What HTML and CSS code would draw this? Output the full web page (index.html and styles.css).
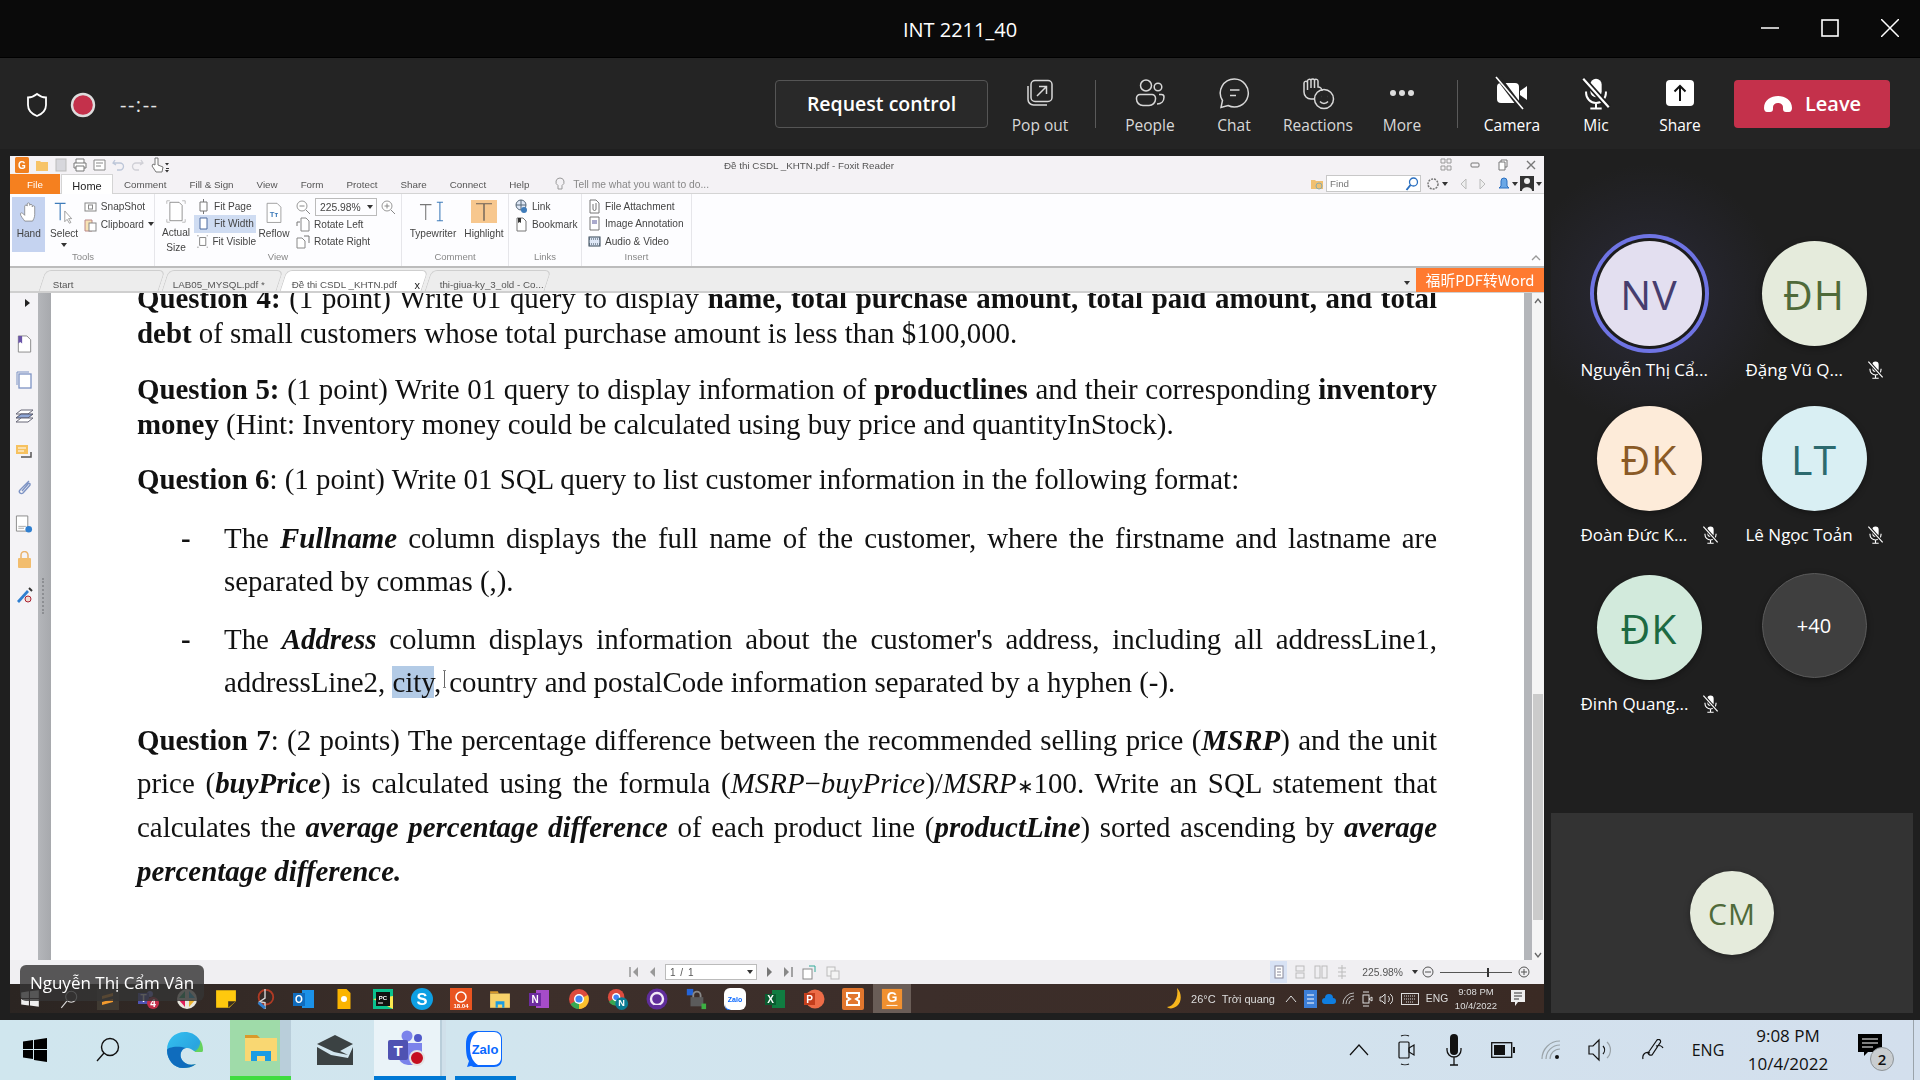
FILE: index.html
```html
<!DOCTYPE html>
<html lang="en">
<head>
<meta charset="utf-8">
<title>INT 2211_40</title>
<link rel="stylesheet" href="styles.css">
</head>
<body>
<svg class="sprite" width="0" height="0">
  <symbol id="micoff" viewBox="0 0 24 24"><rect x="8" y="2" width="8" height="13" rx="4" fill="currentColor"/><path d="M5 11v1a7 7 0 0 0 14 0v-1M12 19v4M8 23h8" fill="none" stroke="currentColor" stroke-width="1.4"/><path d="M3 2l18 20" stroke="#1f1f1f" stroke-width="4"/><path d="M3 2l18 20" stroke="currentColor" stroke-width="1.5"/></symbol>
</svg>

<header class="titlebar">
  <h1 class="title">INT 2211_40</h1>
  <div class="winctl">
    <svg width="18" height="18" viewBox="0 0 18 18"><path d="M0 9h18" stroke="#fff" stroke-width="1.500"/></svg>
    <svg width="18" height="18" viewBox="0 0 18 18"><rect x="1" y="1" width="16" height="16" fill="none" stroke="#fff" stroke-width="1.600"/></svg>
    <svg width="18" height="18" viewBox="0 0 18 18"><path d="M0 0l18 18M18 0L0 18" stroke="#fff" stroke-width="1.500"/></svg>
  </div>
</header>

<section class="toolbar">
  <div class="status">
    <svg width="24" height="26" viewBox="0 0 24 26"><path d="M12 2c3 2.500 6 3.500 9 3.500V13c0 5.500-4 9-9 11-5-2-9-5.500-9-11V5.500c3 0 6-1 9-3.500z" fill="none" stroke="#fff" stroke-width="1.800"/></svg>
    <svg width="26" height="26" viewBox="0 0 26 26"><circle cx="13" cy="13" r="11" fill="#c4314b" stroke="#ddd" stroke-width="2.400"/></svg>
    <span class="timer">--:--</span>
  </div>
  <button class="request">Request control</button>
  <div class="tool">
    <svg width="30" height="30" viewBox="0 0 30 30" class="ico"><rect x="6" y="2.500" width="21" height="21" rx="4"/><path d="M3 8v13.500a5.500 5.500 0 0 0 5.500 5.500H22M12 18l9-9M14 8.500h7.500V16"/></svg>
    <span>Pop out</span>
  </div>
  <i class="vr"></i>
  <div class="tool">
    <svg width="32" height="32" viewBox="0 0 32 32" class="ico"><circle cx="12" cy="8.500" r="5.500"/><circle cx="24" cy="10" r="3.800"/><path d="M2.500 21a3.500 3.500 0 0 1 3.500-3.500h12a3.500 3.500 0 0 1 3.500 3.500v1a6.500 6.500 0 0 1-6.500 6.500H9A6.500 6.500 0 0 1 2.500 22zM25 17.500h2.500A2.500 2.500 0 0 1 30 20c0 4-2.500 7-7 7"/></svg>
    <span>People</span>
  </div>
  <div class="tool">
    <svg width="32" height="32" viewBox="0 0 32 32" class="ico"><path d="M16.500 2A14 14 0 1 1 10 28.500L3 30.500l1.500-7A14 14 0 0 1 16.500 2zM12 13h9.500M12 18.500h6"/></svg>
    <span>Chat</span>
  </div>
  <div class="tool">
    <svg width="34" height="34" viewBox="0 0 34 34" class="ico"><path d="M14 23H10c-4 0-7-3-7-7V7a2 2 0 0 1 3.500-1V5a2 2 0 0 1 3.500-1 2 2 0 0 1 3.500 0 2 2 0 0 1 3.500 1v6c2.500 0 4 2 4 4M6.500 6v8M10 4v8M13.500 4v8"/><circle cx="23" cy="23" r="9.500"/><path d="M19 25.500c2 2.500 6 2.500 8 0M20 20.500h.1M26 20.500h.1"/></svg>
    <span>Reactions</span>
  </div>
  <div class="tool">
    <svg width="30" height="30" viewBox="0 0 30 30"><circle cx="6" cy="15" r="3" fill="#ddd"/><circle cx="15" cy="15" r="3" fill="#ddd"/><circle cx="24" cy="15" r="3" fill="#ddd"/></svg>
    <span>More</span>
  </div>
  <i class="vr"></i>
  <div class="tool on">
    <svg width="34" height="34" viewBox="0 0 34 34"><rect x="2" y="7" width="22" height="20" rx="4" fill="#fff"/><path d="M25 15l7-5v14l-7-5z" fill="#fff"/><path d="M3 1l24 32" stroke="#242424" stroke-width="5"/><path d="M1 1l27 32" stroke="#fff" stroke-width="1.600"/></svg>
    <span>Camera</span>
  </div>
  <div class="tool on">
    <svg width="34" height="34" viewBox="0 0 24 24" class="tool-mic"><use href="#micoff"/></svg>
    <span>Mic</span>
  </div>
  <div class="tool on">
    <svg width="32" height="32" viewBox="0 0 32 32"><rect x="2" y="3" width="28" height="26" rx="4" fill="#fff"/><path d="M16 24V9M10.500 14.500L16 9l5.500 5.500" fill="none" stroke="#111" stroke-width="2"/></svg>
    <span>Share</span>
  </div>
  <button class="leave">
    <svg width="30" height="18" viewBox="0 0 30 18"><path d="M1 13C1 5 8 1 15 1s14 4 14 12c0 2-1 4-3 4h-3c-2 0-3-1-3-3v-2c0-2-2-4-5-4s-5 2-5 4v2c0 2-1 3-3 3H4c-2 0-3-2-3-4z" fill="#fff"/></svg>
    Leave
  </button>
</section>

<main class="main">
  <div class="stage">
    <div class="share">
      <div class="foxit">
        <div class="qa">
          <div class="qa-icons">
            <svg width="14" height="16" viewBox="0 0 14 16"><rect width="14" height="16" rx="1.500" fill="#f08020"/><text x="7" y="12" class="glyph-w">G</text></svg>
            <svg width="14" height="14" viewBox="0 0 14 14"><path d="M1 3h4l1 1h7v9H1z" fill="#f7c468"/></svg>
            <svg width="12" height="14" viewBox="0 0 12 14"><rect x="1" y="1" width="10" height="12" fill="#d7d7dc" stroke="#bbb"/></svg>
            <svg width="14" height="14" viewBox="0 0 14 14"><path d="M3 5V1h8v4M3 10H1V5h12v5h-2M3 8h8v5H3z" fill="#fff" stroke="#777"/></svg>
            <svg width="13" height="14" viewBox="0 0 13 14"><path d="M1 2h11v10H1zM3 5h7M3 8h5" fill="#fff" stroke="#888"/></svg>
            <svg width="13" height="14" viewBox="0 0 13 14"><path d="M3 2L1 5l3 2M1.500 5H8a3.500 3.500 0 0 1 0 7H5" fill="none" stroke="#bcc6d8" stroke-width="1.300"/></svg>
            <svg width="13" height="14" viewBox="0 0 13 14"><path d="M10 2l2 3-3 2M11.500 5H5a3.500 3.500 0 0 0 0 7h3" fill="none" stroke="#d0d0d6" stroke-width="1.300"/></svg>
            <svg width="20" height="16" viewBox="0 0 20 16"><path d="M5 1v7L3 7 2 9l4 6h6l1-5-5-2V1z" fill="#fff" stroke="#777"/><path d="M15 6h4l-2 2.500zM16 11h3v1h-3zM15 13h4l-2 2.500z" fill="#333"/></svg>
          </div>
          <span class="doc-title">Đề thi CSDL _KHTN.pdf - Foxit Reader</span>
          <div class="qa-win">
            <svg width="12" height="14" viewBox="0 0 12 14"><path d="M1 1h4v4H1zM7 1h4v4H7zM1 8h4v4H1zM7 8h4v4H7z" fill="none" stroke="#999"/></svg>
            <svg width="10" height="10" viewBox="0 0 10 10"><rect x="1" y="3" width="8" height="4" rx="1" fill="none" stroke="#777"/></svg>
            <svg width="10" height="12" viewBox="0 0 10 12"><path d="M3 3V1h6v7H7M1 3h6v8H1z" fill="#fff" stroke="#777"/></svg>
            <svg width="10" height="10" viewBox="0 0 10 10"><path d="M1 1l8 8M9 1L1 9" stroke="#777" stroke-width="1.400"/></svg>
          </div>
        </div>
        <div class="tabs">
          <span class="t-file">File</span>
          <span class="t-home">Home</span>
          <span>Comment</span><span>Fill &amp; Sign</span><span>View</span><span>Form</span><span>Protect</span><span>Share</span><span>Connect</span><span>Help</span>
          <svg class="bulb" width="10" height="14" viewBox="0 0 10 14"><path d="M5 1a4 4 0 0 1 2 7.500V12H3V8.500A4 4 0 0 1 5 1z" fill="none" stroke="#999"/></svg>
          <span class="tell">Tell me what you want to do...</span>
          <div class="find-wrap">
            <svg width="14" height="14" viewBox="0 0 14 14"><path d="M1 3h4l1 1h7v8H1z" fill="#f0c070"/><circle cx="9" cy="9" r="3" fill="none" stroke="#8aa"/></svg>
            <div class="find">Find
              <svg width="14" height="14" viewBox="0 0 14 14"><circle cx="8.500" cy="5" r="4" fill="none" stroke="#2a6fc0" stroke-width="1.300"/><path d="M5.500 8L1.500 13" stroke="#2a6fc0" stroke-width="2"/></svg>
            </div>
            <svg width="14" height="14" viewBox="0 0 14 14"><circle cx="7" cy="7" r="5" fill="none" stroke="#777" stroke-dasharray="2 1" stroke-width="1.500"/></svg>
            <b class="tri"></b>
            <svg class="gap8" width="7" height="14" viewBox="0 0 7 14"><path d="M6 2L1 7l5 5z" fill="#eee" stroke="#bbb"/></svg>
            <svg class="gap8" width="7" height="14" viewBox="0 0 7 14"><path d="M1 2l5 5-5 5z" fill="#eee" stroke="#bbb"/></svg>
            <svg class="gap8" width="12" height="14" viewBox="0 0 12 14"><path d="M6 1a3 3 0 0 1 3 3v5l2 2H1l2-2V4a3 3 0 0 1 3-3z" fill="#6aa7e6" stroke="#2a6fc0"/></svg>
            <b class="tri"></b>
            <svg width="14" height="15" viewBox="0 0 14 15"><rect width="14" height="15" fill="#333"/><circle cx="7" cy="5" r="3" fill="#eee"/><path d="M2 15c0-5 10-5 10 0z" fill="#eee"/></svg>
            <b class="tri"></b>
          </div>
        </div>
        <div class="ribbon">
          <div class="group g-tools">
            <div class="gbody">
              <div class="big hand">
                <svg viewBox="0 0 28 30"><path d="M8 27c-2-3-6-7-6-10 0-2 3-2 4 0l2 2V6a1.800 1.800 0 0 1 3.500 0V3a1.800 1.800 0 0 1 3.500 0v2a1.800 1.800 0 0 1 3.500 0v2a1.800 1.800 0 0 1 3.500 0v11c0 4-2 7-3 9z" fill="#fff" stroke="#777"/></svg>
                <span>Hand</span>
              </div>
              <div class="big select">
                <svg viewBox="0 0 28 30"><path d="M2 3h14M9 3v22" stroke="#3f7cba" stroke-width="1.500" fill="none"/><path d="M15 13v14l3-3 3 5 2-1-3-5h4z" fill="#fff" stroke="#888"/></svg>
                <span>Select</span><b class="tri small"></b>
              </div>
              <div class="col c-tools">
                <div class="sm"><svg width="13" height="13" viewBox="0 0 13 13"><rect x="1" y="3" width="11" height="8" fill="#fff" stroke="#888"/><rect x="4.500" y="5" width="4" height="4" fill="none" stroke="#888"/></svg>SnapShot</div>
                <div class="sm"><svg width="13" height="15" viewBox="0 0 13 15"><path d="M1 3h7v11H1z" fill="#f8e3b5" stroke="#b88"/><rect x="5" y="6" width="7" height="8" fill="#fff" stroke="#888"/></svg>Clipboard <b class="tri"></b></div>
              </div>
            </div>
            <div class="glabel">Tools</div>
          </div>
          <div class="group g-view">
            <div class="gbody">
              <div class="big actual">
                <svg viewBox="0 0 26 30"><path d="M5 3h12l4 4v20H5z" fill="#fff" stroke="#777"/><path d="M1 5V1h4M25 5V1h-4M1 25v4h4M25 25v4h-4" fill="none" stroke="#aaa"/></svg>
                <span>Actual<br>Size</span>
              </div>
              <div class="col c-fit">
                <div class="sm"><svg width="13" height="15" viewBox="0 0 13 15"><path d="M3 3h7v9H3zM6.500 0v3M6.500 12v3" fill="#fff" stroke="#777"/></svg>Fit Page</div>
                <div class="sm hl"><svg width="13" height="15" viewBox="0 0 13 15"><path d="M3 2h7v11H3z" fill="#fff" stroke="#4d6a9e"/></svg>Fit Width</div>
                <div class="sm"><svg width="13" height="15" viewBox="0 0 13 15"><path d="M3 3h7v9H3z" fill="#fff" stroke="#777"/><path d="M0 1h2M11 1h2M0 14h2M11 14h2" stroke="#999"/></svg>Fit Visible</div>
              </div>
              <div class="big reflow">
                <svg viewBox="0 0 24 30"><path d="M3 3h13l5 5v20H3z" fill="#fff" stroke="#888"/><text x="12" y="21" class="glyph-b">Tт</text></svg>
                <span>Reflow</span>
              </div>
              <div class="col c-zoom">
                <div class="sm zoomrow">
                  <svg width="15" height="15" viewBox="0 0 15 15"><circle cx="6" cy="6" r="5" fill="#fff" stroke="#999"/><path d="M3.500 6h5M10 10l4 4" stroke="#888"/></svg>
                  <div class="zoombox">225.98%<b class="tri"></b></div>
                  <svg width="15" height="15" viewBox="0 0 15 15"><circle cx="6" cy="6" r="5" fill="#fff" stroke="#999"/><path d="M3.500 6h5M6 3.500v5M10 10l4 4" stroke="#888"/></svg>
                </div>
                <div class="sm"><svg width="14" height="15" viewBox="0 0 14 15"><path d="M5 1h5l3 3v10H5z" fill="#fff" stroke="#888"/><path d="M1 9V5h3" fill="none" stroke="#777"/></svg>Rotate Left</div>
                <div class="sm"><svg width="14" height="15" viewBox="0 0 14 15"><path d="M1 4h5l3 3v7H1z" fill="#fff" stroke="#888"/><path d="M13 9V2h-5" fill="none" stroke="#777"/></svg>Rotate Right</div>
              </div>
            </div>
            <div class="glabel">View</div>
          </div>
          <div class="group g-comment">
            <div class="gbody">
              <div class="big typew">
                <svg width="40" viewBox="0 0 40 30"><path d="M3 6h15M10.500 6v20" stroke="#777" stroke-width="1.400" fill="none"/><path d="M25 3h8M25 27h8M29 3v24" stroke="#3f7cba" stroke-width="1.400" fill="none"/></svg>
                <span>Typewriter</span>
              </div>
              <div class="big highl">
                <svg viewBox="0 0 26 30" preserveAspectRatio="none"><rect width="26" height="30" fill="#f7c78e"/><path d="M5 5h16M13 5v22" stroke="#6d6257" stroke-width="1.400"/></svg>
                <span>Highlight</span>
              </div>
            </div>
            <div class="glabel">Comment</div>
          </div>
          <div class="group g-links">
            <div class="gbody">
              <div class="col">
                <div class="sm"><svg width="13" height="15" viewBox="0 0 13 15"><circle cx="6" cy="6" r="5" fill="#dde6f5" stroke="#567"/><path d="M1 6h10M6 1v10" stroke="#567"/><circle cx="9" cy="11" r="3" fill="#3f7cba"/></svg>Link</div>
                <div class="sm"><svg width="13" height="15" viewBox="0 0 13 15"><path d="M2 1h6l3 3v10H2z" fill="#fff" stroke="#777"/><path d="M3 1h3v5L4.500 5 3 6z" fill="#333"/></svg>Bookmark</div>
              </div>
            </div>
            <div class="glabel">Links</div>
          </div>
          <div class="group g-insert">
            <div class="gbody">
              <div class="col">
                <div class="sm"><svg width="13" height="15" viewBox="0 0 13 15"><path d="M2 1h6l3 3v10H2z" fill="#fff" stroke="#777"/><path d="M5 5v5a1.500 1.500 0 0 0 3 0V4" fill="none" stroke="#777"/></svg>File Attachment</div>
                <div class="sm"><svg width="13" height="15" viewBox="0 0 13 15"><path d="M2 1h9v13H2z" fill="#fff" stroke="#777"/><path d="M4 4h5v4H4z" fill="#aac" /></svg>Image Annotation</div>
                <div class="sm"><svg width="13" height="15" viewBox="0 0 13 15"><rect x="1" y="3" width="11" height="9" fill="#dfe8f7" stroke="#345"/><path d="M1 5h11M1 10h11" stroke="#345" stroke-dasharray="1 1"/></svg>Audio &amp; Video</div>
              </div>
            </div>
            <div class="glabel">Insert</div>
          </div>
          <svg class="collapse" width="10" height="8" viewBox="0 0 10 8"><path d="M1 6l4-4 4 4" fill="none" stroke="#999" stroke-width="1.300"/></svg>
        </div>
        <div class="doctabs">
          <div class="dtab d0"><span>Start</span></div>
          <div class="dtab d1"><span>LAB05_MYSQL.pdf *</span></div>
          <div class="dtab d2"><span>Đề thi CSDL _KHTN.pdf</span><em>x</em></div>
          <div class="dtab d3"><span>thi-giua-ky_3_old - Co...</span></div>
          <b class="tri tabarrow"></b>
          <div class="convert">福昕PDF转Word</div>
        </div>
        <div class="docrow">
          <nav class="side">
            <b class="tri-right"></b>
            <svg width="15" height="19" viewBox="0 0 15 19"><path d="M1 1h9l4 4v13H1z" fill="#fff" stroke="#888"/><path d="M1 1h4v8L3 7.500 1 9z" fill="#6a54a8"/></svg>
            <svg width="16" height="18" viewBox="0 0 16 18"><path d="M1 1h12M1 1v13" stroke="#7d93c4" fill="none"/><rect x="3" y="3" width="12" height="14" fill="#fff" stroke="#7d93c4" stroke-width="1.300"/></svg>
            <svg width="19" height="16" viewBox="0 0 19 16"><path d="M1 6l5-4h12l-5 4z" fill="#fff" stroke="#667"/><path d="M1 10l5-4h12l-5 4z" fill="#8ea6d6" stroke="#556"/><path d="M1 14l5-4h12l-5 4z" fill="#fff" stroke="#667"/></svg>
            <svg width="18" height="16" viewBox="0 0 18 16"><rect x="1" y="1" width="12" height="9" fill="#f6c15f"/><path d="M3 4h8M3 7h6" stroke="#fff"/><path d="M6 13h10V8" fill="none" stroke="#555" stroke-width="1.500"/></svg>
            <svg width="17" height="18" viewBox="0 0 17 18"><path d="M13 2L4 11a2 2 0 0 0 3 3l7-8a1 1 0 0 0-2-1l-6 7" fill="none" stroke="#7d93c4" stroke-width="1.400"/></svg>
            <svg width="18" height="19" viewBox="0 0 18 19"><path d="M1 1h12v16H1z" fill="#fff" stroke="#888"/><path d="M3 12h8M3 14h6" stroke="#aaa"/><circle cx="14" cy="15" r="3.500" fill="#2f7fd0"/></svg>
            <svg width="15" height="18" viewBox="0 0 15 18"><rect x="1" y="7" width="13" height="10" rx="1" fill="#f2bd6e"/><path d="M4 7V4a3.500 3.500 0 0 1 7 0v3" fill="none" stroke="#eab26a" stroke-width="1.500"/></svg>
            <svg width="17" height="18" viewBox="0 0 17 18"><path d="M1 14L11 3l2 2L3 16z" fill="#2f7fd0"/><path d="M13 1l3 3" stroke="#333" stroke-width="2"/><circle cx="12" cy="12" r="3" fill="#f1d9d0" stroke="#a23"/></svg>
          </nav>
          <div class="strip"><i class="dots"></i></div>
          <article class="page">
            <div class="para first">
              <div class="ln"><b>Question 4:</b> (1 point) Write 01 query to display <b>name, total purchase amount, total paid amount, and total</b></div>
              <div class="end"><b>debt</b> of small customers whose total purchase amount is less than $100,000.</div>
            </div>
            <div class="para">
              <div class="ln"><b>Question 5:</b> (1 point) Write 01 query to display information of <b>productlines</b> and their corresponding <b>inventory</b></div>
              <div class="end"><b>money</b> (Hint: Inventory money could be calculated using buy price and quantityInStock).</div>
            </div>
            <div class="para">
              <div class="end"><b>Question 6</b>: (1 point) Write 01 SQL query to list customer information in the following format:</div>
            </div>
            <div class="bullet b1">
              <span class="dash">-</span>
              <div class="btext">
                <div class="ln">The <b><i>Fullname</i></b> column displays the full name of the customer, where the firstname and lastname are</div>
                <div class="end">separated by commas (,).</div>
              </div>
            </div>
            <div class="bullet b2">
              <span class="dash">-</span>
              <div class="btext">
                <div class="ln">The <b><i>Address</i></b> column displays information about the customer's address, including all addressLine1,</div>
                <div class="end">addressLine2, <mark>city</mark>,<span class="ibeam">&nbsp;</span>country and postalCode information separated by a hyphen (-).</div>
              </div>
            </div>
            <div class="para q7">
              <div class="ln"><b>Question 7</b>: (2 points) The percentage difference between the recommended selling price (<b><i>MSRP</i></b>) and the unit</div>
              <div class="ln">price (<b><i>buyPrice</i></b>) is calculated using the formula (<i>MSRP</i>−<i>buyPrice</i>)/<i>MSRP</i><span class="ast">∗</span>100. Write an SQL statement that</div>
              <div class="ln">calculates the <b><i>average percentage difference</i></b> of each product line (<b><i>productLine</i></b>) sorted ascending by <b><i>average</i></b></div>
              <div class="end"><b><i>percentage difference.</i></b></div>
            </div>
          </article>
          <i class="strip2"></i>
          <div class="vscroll">
            <svg width="12" height="10" viewBox="0 0 12 10"><path d="M3 7l3-4 3 4" fill="none" stroke="#666" stroke-width="1.300"/></svg>
            <i class="thumb"></i>
            <svg width="12" height="10" viewBox="0 0 12 10"><path d="M3 3l3 4 3-4" fill="none" stroke="#666" stroke-width="1.300"/></svg>
          </div>
        </div>
        <div class="statusbar">
          <div class="pager">
            <svg width="10" height="14" viewBox="0 0 10 14"><path d="M1 2v10" stroke="#999" stroke-width="1.500"/><path d="M9 2L4 7l5 5z" fill="#999"/></svg>
            <svg width="8" height="14" viewBox="0 0 8 14"><path d="M7 2L2 7l5 5z" fill="#999"/></svg>
            <div class="pbox">1 / 1<b class="tri"></b></div>
            <svg width="8" height="14" viewBox="0 0 8 14"><path d="M1 2l5 5-5 5z" fill="#777"/></svg>
            <svg width="10" height="14" viewBox="0 0 10 14"><path d="M9 2v10" stroke="#888" stroke-width="1.500"/><path d="M1 2l5 5-5 5z" fill="#888"/></svg>
            <svg width="15" height="15" viewBox="0 0 15 15"><rect x="1" y="4" width="9" height="10" fill="#fff" stroke="#888"/><path d="M7 1h6v6" fill="none" stroke="#3a9"/></svg>
            <svg width="15" height="15" viewBox="0 0 15 15"><rect x="1" y="2" width="8" height="9" fill="#f4f4f4" stroke="#bbb"/><rect x="5" y="6" width="8" height="8" fill="#f4f4f4" stroke="#bbb"/></svg>
          </div>
          <div class="viewbtns">
            <span class="vb active"><svg width="10" height="14" viewBox="0 0 10 14"><rect x="1" y="1" width="8" height="12" fill="#fff" stroke="#889"/><path d="M3 4h4M3 7h4M3 10h4" stroke="#889"/></svg></span>
            <span class="vb"><svg width="10" height="14" viewBox="0 0 10 14"><rect x="1" y="1" width="8" height="5" fill="none" stroke="#bbb"/><rect x="1" y="8" width="8" height="5" fill="none" stroke="#bbb"/></svg></span>
            <span class="vb"><svg width="14" height="14" viewBox="0 0 14 14"><rect x="1" y="1" width="5" height="12" fill="none" stroke="#bbb"/><rect x="8" y="1" width="5" height="12" fill="none" stroke="#bbb"/></svg></span>
            <span class="vb"><svg width="14" height="14" viewBox="0 0 14 14"><path d="M7 0v14M3 3h8M3 7h8M3 11h8" stroke="#bbb" fill="none"/></svg></span>
            <span class="zoomval">225.98%</span>
            <b class="tri"></b>
            <svg width="12" height="12" viewBox="0 0 12 12"><circle cx="6" cy="6" r="5" fill="none" stroke="#555"/><path d="M3 6h6" stroke="#555"/></svg>
            <div class="slider"><i></i></div>
            <svg width="12" height="12" viewBox="0 0 12 12"><circle cx="6" cy="6" r="5" fill="none" stroke="#555"/><path d="M3 6h6M6 3v6" stroke="#555"/></svg>
          </div>
        </div>
      </div>
      <div class="innerbar">
        <div class="iconrow">
          <svg width="20" height="20" viewBox="0 0 20 20"><path d="M2 4l7-1v6H2zM10 3l8-1v7h-8zM2 10h7v6l-7-1zM10 10h8v7l-8-1z" fill="#eee"/></svg>
          <svg width="20" height="20" viewBox="0 0 20 20"><circle cx="12" cy="8" r="5" fill="none" stroke="#ddd"/><path d="M8 12l-5 6" stroke="#ddd"/></svg>
          <svg width="22" height="22" viewBox="0 0 22 22"><rect width="22" height="22" fill="#403a32"/><path d="M5 8l11-3v3L5 11zM5 14l11-3v3L5 17z" fill="#f29a2e"/></svg>
          <svg width="22" height="22" viewBox="0 0 22 22"><circle cx="13" cy="6" r="3" fill="#7b83eb"/><rect x="1" y="5" width="11" height="11" fill="#4f52b2"/><text x="6.500" y="14" class="glyph-w">T</text><circle cx="16" cy="15" r="6" fill="#c4314b"/><text x="16" y="19" class="glyph-w">4</text></svg>
          <svg width="22" height="22" viewBox="0 0 22 22"><circle cx="11" cy="11" r="10" fill="#e8e6dd"/><path d="M9 3v7H3z" fill="#2eb67d"/><path d="M13 3v7h6z" fill="#36c5f0"/><path d="M9 19v-7H3z" fill="#e01e5a"/><path d="M13 19v-7h6z" fill="#ecb22e"/></svg>
          <svg width="20" height="20" viewBox="0 0 20 20"><path d="M1 2h18v10l-6 6H1z" fill="#ffc90e"/><path d="M12 18v-6h7z" fill="#3b3020"/></svg>
          <svg width="22" height="24" viewBox="0 0 22 24"><circle cx="12" cy="10" r="8" fill="none" stroke="#b03a24" stroke-width="2"/><path d="M11 1v10l-6 4 6 1v7" fill="none" stroke="#d9d9d9" stroke-width="1.500"/><path d="M4 16l7 6" stroke="#2f7fd0" stroke-width="3"/></svg>
          <svg width="22" height="22" viewBox="0 0 22 22"><rect x="9" y="2" width="12" height="18" fill="#1b92e8"/><rect y="5" width="12" height="13" fill="#0f6cbd"/><text x="6" y="15" class="glyph-w">O</text></svg>
          <svg width="15" height="22" viewBox="0 0 15 22"><path d="M1 1h9l4 4v16H1z" fill="#fbb400"/><circle cx="7.500" cy="11" r="3" fill="#fff"/></svg>
          <svg width="22" height="22" viewBox="0 0 22 22"><rect x="1" y="1" width="20" height="20" fill="#0ac18e"/><path d="M1 11l20 10V8z" fill="#fce94f"/><rect x="4" y="4" width="14" height="14" fill="#111"/><text x="11" y="12" class="glyph-t">PC</text><path d="M6 15h5" stroke="#fff"/></svg>
          <svg width="20" height="20" viewBox="0 0 20 20"><circle cx="10" cy="10" r="10" fill="#0e9fe3"/><text x="10" y="15" class="glyph-w big-g">S</text></svg>
          <svg width="22" height="22" viewBox="0 0 22 22"><rect width="22" height="22" fill="#e95420"/><circle cx="11" cy="9" r="5" fill="none" stroke="#fff" stroke-width="1.500"/><text x="11" y="20" class="glyph-t">18.04</text></svg>
          <svg width="20" height="20" viewBox="0 0 20 20"><path d="M1 3h7l1 2H1z" fill="#d99a2b"/><rect x="1" y="5" width="18" height="13" fill="#f8d26a"/><path d="M6 18v-6h8v6h-2v-3H8v3z" fill="#1b9ce2"/></svg>
          <svg width="22" height="22" viewBox="0 0 22 22"><rect x="8" y="2" width="13" height="18" fill="#a64cc9"/><rect x="1" y="5" width="12" height="13" fill="#6d2ba0"/><text x="7" y="15" class="glyph-w">N</text></svg>
          <svg width="22" height="22" viewBox="0 0 22 22"><circle cx="11" cy="11" r="10" fill="#dd4b3e"/><path d="M11 11L2.500 16A10 10 0 0 0 11 21z" fill="#38a853"/><path d="M11 11v10a10 10 0 0 0 9-14z" fill="#fbc02d"/><circle cx="11" cy="11" r="5" fill="#fff"/><circle cx="11" cy="11" r="3.600" fill="#4285f4"/></svg>
          <svg width="24" height="24" viewBox="0 0 24 24"><circle cx="10" cy="10" r="9" fill="#dd4b3e"/><path d="M10 10L2 15a9 9 0 0 0 8 4z" fill="#38a853"/><circle cx="10" cy="10" r="4.500" fill="#fff"/><circle cx="10" cy="10" r="3" fill="#4285f4"/><circle cx="16" cy="17" r="7" fill="#0b7c93"/><text x="16" y="20" class="glyph-w">N</text></svg>
          <svg width="22" height="22" viewBox="0 0 22 22"><circle cx="11" cy="11" r="10.500" fill="#5f2d9a"/><circle cx="11" cy="11" r="6" fill="none" stroke="#f1e9f7" stroke-width="2.400"/><path d="M8 17h6v3H8z" fill="#5f2d9a"/></svg>
          <svg width="24" height="24" viewBox="0 0 24 24"><rect x="2" y="1" width="7" height="7" fill="#2464d8"/><path d="M9 11V8a4 4 0 0 1 8 0v3" fill="none" stroke="#888" stroke-width="2"/><rect x="6" y="10" width="14" height="10" fill="#5b5b5b"/><path d="M18 17h5v6h-5z" fill="#3cb043"/></svg>
          <svg width="22" height="22" viewBox="0 0 22 22"><rect width="22" height="22" rx="6" fill="#fff"/><path d="M1 15c0 5 3 7 8 7H4c-2 0-3-3-3-7z" fill="#0a68ff"/><text x="11" y="14" class="glyph-z">Zalo</text></svg>
          <svg width="22" height="22" viewBox="0 0 22 22"><rect x="8" y="2" width="13" height="18" fill="#107c41"/><rect x="1" y="6" width="11" height="11" fill="#0a5c30"/><text x="6.500" y="15" class="glyph-w">X</text></svg>
          <svg width="22" height="22" viewBox="0 0 22 22"><circle cx="12" cy="11" r="9.500" fill="#ed6c47"/><rect x="1" y="5" width="11" height="12" fill="#c43e1c"/><text x="6.500" y="15" class="glyph-w">P</text></svg>
          <svg width="22" height="22" viewBox="0 0 22 22"><rect width="22" height="22" rx="2" fill="#e2762d"/><path d="M5 5h12v4l-3 2 3 2v4H5v-4l3-2-3-2z" fill="none" stroke="#fff" stroke-width="2"/></svg>
          <span class="foxbtn"><svg width="22" height="24" viewBox="0 0 22 24"><rect y="1" width="22" height="22" fill="#f09030"/><text x="11" y="15" class="glyph-w big-g">G</text><path d="M5 19h12" stroke="#fff"/></svg></span>
        </div>
        <div class="traymini">
          <span><svg width="18" height="24" viewBox="0 0 18 24"><path d="M11 1c5 5 5 14 0 18-4 3-8 3-10 1 6 0 12-9 10-19z" fill="#f6b51d"/></svg></span>
          <span class="weather">26°C &nbsp;Trời quang</span>
          <span><svg width="12" height="8" viewBox="0 0 12 8"><path d="M1 7l5-6 5 6" fill="none" stroke="#ddd"/></svg></span>
          <span><svg width="13" height="18" viewBox="0 0 13 18"><rect width="13" height="18" fill="#3c7fd8"/><path d="M3 5h7M3 9h7M3 13h7" stroke="#fff"/></svg></span>
          <span><svg width="14" height="12" viewBox="0 0 14 12"><path d="M3 11a3 3 0 0 1 0-6 4 4 0 0 1 8 0 3 3 0 0 1 0 6z" fill="#0f7ee0"/></svg></span>
          <span><svg width="13" height="13" viewBox="0 0 13 13"><path d="M1 12a11 11 0 0 1 11-11M4 12a8 8 0 0 1 8-8M7 12a5 5 0 0 1 5-5" fill="none" stroke="#bbb"/></svg></span>
          <span><svg width="11" height="18" viewBox="0 0 11 18"><rect x="1" y="5" width="6" height="8" fill="none" stroke="#ddd"/><path d="M7 9l3-2v4zM1 2h6M1 16h6" stroke="#ddd" fill="none"/></svg></span>
          <span><svg width="14" height="14" viewBox="0 0 14 14"><path d="M1 5h2l3-3v10L3 9H1zM9 4a4 4 0 0 1 0 6M11 2a6 6 0 0 1 0 10" fill="none" stroke="#ddd"/></svg></span>
          <span><svg width="18" height="12" viewBox="0 0 18 12"><rect x=".5" y=".5" width="17" height="11" fill="none" stroke="#ddd"/><path d="M3 3h12M3 6h12M5 9h8" stroke="#ddd" stroke-dasharray="1 1"/></svg></span>
          <span class="mini-eng">ENG</span>
          <span class="mini-clock">9:08 PM<br>10/4/2022</span>
          <span><svg width="14" height="18" viewBox="0 0 14 18"><path d="M0 0h14v12H7l-3 4v-4H0z" fill="#eee"/><path d="M3 3h8M3 6h8M3 9h5" stroke="#333"/></svg></span>
        </div>
      </div>
      <div class="nametag">Nguyễn Thị Cẩm Vân</div>
    </div>
  </div>

  <aside class="gallery">
    <div class="people">
      <div class="person">
        <div class="avatar a-nv speaking">NV</div>
        <div class="pname">Nguyễn Thị Cẩ...</div>
      </div>
      <div class="person">
        <div class="avatar a-dh">ĐH</div>
        <div class="pname">Đặng Vũ Q...<svg class="pm" width="19" height="19"><use href="#micoff"/></svg></div>
      </div>
      <div class="person">
        <div class="avatar a-dk">ĐK</div>
        <div class="pname">Đoàn Đức K...<svg class="pm" width="19" height="19"><use href="#micoff"/></svg></div>
      </div>
      <div class="person">
        <div class="avatar a-lt">LT</div>
        <div class="pname">Lê Ngọc Toản<svg class="pm" width="19" height="19"><use href="#micoff"/></svg></div>
      </div>
      <div class="person p-low">
        <div class="avatar a-dq">ĐK</div>
        <div class="pname">Đinh Quang...<svg class="pm" width="19" height="19"><use href="#micoff"/></svg></div>
      </div>
      <div class="person">
        <div class="avatar a-more">+40</div>
      </div>
    </div>
    <div class="cmtile"><div class="avatar a-cm">CM</div></div>
  </aside>
</main>

<footer class="wintask">
  <div class="wt w-start"><svg width="24" height="24" viewBox="0 0 24 24"><path d="M0 3.500l10-1.400V11H0zM11 2l13-2v11H11zM0 12h10v9L0 19.600zM11 12h13v12l-13-2z" fill="#000"/></svg></div>
  <div class="wt w-search"><svg width="26" height="26" viewBox="0 0 26 26"><circle cx="15" cy="10" r="8.500" fill="none" stroke="#111" stroke-width="1.400"/><path d="M9 16l-7 8" stroke="#111" stroke-width="1.400"/></svg></div>
  <div class="wt w-edge"><svg width="38" height="38" viewBox="0 0 38 38"><defs><linearGradient id="eg" x1="0" y1="0" x2="1" y2="1"><stop offset="0" stop-color="#35c1f1"/><stop offset=".6" stop-color="#2aa5e0"/><stop offset="1" stop-color="#66d35c"/></linearGradient></defs><path d="M19 1C8 1 1 9 1 19c0 10 7 18 16 18 5 0 9-1 13-4-6 2-11 0-14-4-3-5-1-11 4-12 3-.5 6 1 8 3h8C37 10 30 1 19 1z" fill="url(#eg)"/><path d="M1 19c0 10 7 18 16 18 5 0 9-1 13-4-6 2-11 0-14-4-3-5-1-11 4-12-10-3-19 0-19 2z" fill="#0f6cbd"/><path d="M28 21h8c.5 0 1-1 1-2 0-4-1-7-3-10 1 5-2 10-6 12z" fill="#66d35c"/></svg></div>
  <div class="wt w-explorer"><svg width="32" height="28" viewBox="0 0 32 28"><path d="M0 0h12l3 3H0z" fill="#d99a2b"/><rect y="3" width="32" height="23" fill="#f9d772"/><path d="M6 26V16h20v10h-6v-5h-8v5z" fill="#1b9ce2"/></svg></div>
  <div class="wt w-mail"><svg width="36" height="30" viewBox="0 0 36 30"><path d="M0 9L18 0l18 9-13 7 8 4-14-3L0 9z" fill="#3b4243"/><path d="M0 12l14 8 17 3 5-11v18H0z" fill="#3b4243"/></svg></div>
  <div class="wt w-teams"><svg width="38" height="38" viewBox="0 0 38 38"><circle cx="19" cy="6" r="5.500" fill="#7b83eb"/><circle cx="30" cy="8" r="4" fill="#5059c9"/><path d="M10 13h24v12a10 10 0 0 1-10 10h-4a10 10 0 0 1-10-10z" fill="#7b83eb"/><rect y="10" width="20" height="20" rx="2" fill="#4f52b2"/><text x="10" y="26" class="glyph-tm">T</text><circle cx="29" cy="28" r="7" fill="#c50f1f" stroke="#e3e3e3" stroke-width="2"/></svg></div>
  <div class="wt w-zalo"><svg width="38" height="38" viewBox="0 0 38 38"><path d="M11 1h18c5 0 8 3 8 8v20c0 5-3 8-8 8H11c-2 0-3 0-5-1L2 37l2-6C1 27 1 20 1 14 1 6 5 1 11 1z" fill="#0a68ff"/><path d="M13 2h16c4 0 7 3 7 7v19c0 4-3 7-7 7H13c-4-2-8-8-8-17C5 10 8 4 13 2z" fill="#fff"/><text x="20" y="24" class="glyph-zl">Zalo</text></svg></div>
  <div class="wtray">
    <span><svg width="20" height="12" viewBox="0 0 20 12"><path d="M1 11l9-10 9 10" fill="none" stroke="#111" stroke-width="1.200"/></svg></span>
    <span><svg width="18" height="38" viewBox="0 0 18 38"><rect x="2" y="11" width="10" height="16" rx="1" fill="none" stroke="#111" stroke-width="1.200"/><path d="M12 17l5-3v10l-5-3zM4 5c2-1 6-1 8 0M4 33c2 1 6 1 8 0" fill="none" stroke="#111" stroke-width="1.200"/></svg></span>
    <span><svg width="18" height="32" viewBox="0 0 18 32"><rect x="5" y="0" width="8" height="21" rx="4" fill="#111"/><path d="M2 14v2a7 7 0 0 0 14 0v-2M9 23v8M5 31h8" fill="none" stroke="#111" stroke-width="1.300"/></svg></span>
    <span><svg width="24" height="16" viewBox="0 0 24 16"><rect x=".700" y=".700" width="20" height="14.600" fill="none" stroke="#111" stroke-width="1.300"/><rect x="3" y="3" width="11" height="10" fill="#111"/><rect x="22" y="5" width="2" height="6" fill="#111"/></svg></span>
    <span><svg width="20" height="20" viewBox="0 0 20 20"><path d="M1 19A18 18 0 0 1 19 1M5 19A14 14 0 0 1 19 5M9 19A10 10 0 0 1 19 9" fill="none" stroke="#9aa3a8" stroke-width="1.200"/><circle cx="16" cy="17" r="2" fill="#111"/></svg></span>
    <span><svg width="24" height="24" viewBox="0 0 24 24"><path d="M1 8h4l6-6v20l-6-6H1z" fill="none" stroke="#111" stroke-width="1.200"/><path d="M15 8a6 6 0 0 1 0 8" fill="none" stroke="#111" stroke-width="1.200"/><path d="M19 4a11 11 0 0 1 0 16" fill="none" stroke="#9aa3a8" stroke-width="1.200"/></svg></span>
    <span><svg width="22" height="22" viewBox="0 0 22 22"><path d="M15 1L6 14a3 3 0 0 0 4 2l8-12a2 2 0 0 0-3-3zM8 14c-5-2-8 2-7 6M14 7c3-1 6 0 7 2" fill="none" stroke="#111" stroke-width="1.200"/></svg></span>
    <span class="w-eng">ENG</span>
    <span class="w-clock">9:08 PM<br>10/4/2022</span>
    <span class="w-notif"><svg width="24" height="22" viewBox="0 0 24 22"><path d="M0 0h24v18H10l-4 4v-4H0z" fill="#000"/><path d="M4 5h16M4 9h16M4 13h11" stroke="#fff" stroke-width="1.200"/></svg><b class="nbadge">2</b></span>
  </div>
</footer>
</body>
</html>
```

FILE: styles.css
```css
* { box-sizing: border-box; }
html, body { margin: 0; height: 100%; }
body {
  width: 1920px; height: 1080px; overflow: hidden;
  display: flex; flex-direction: column;
  background: #1f1f1f; color: #fff;
  font-family: "Open Sans", "Noto Sans", sans-serif;
}
.sprite { position: absolute; }
button { font-family: inherit; cursor: default; }

/* title bar */
.titlebar { height: 58px; flex: none; background: #0a0a0a; display: flex; align-items: center; justify-content: center; position: relative; border-bottom: 1px solid #000; }
.title { margin: 0; padding-top: 2px; font-size: 20px; font-weight: 400; line-height: 56px; }
.winctl { position: absolute; right: 21px; top: 19px; display: flex; gap: 42px; }

/* toolbar */
.toolbar { height: 91px; flex: none; background: #242424; display: flex; align-items: center; padding: 0 30px 0 25px; }
.status { display: flex; align-items: center; gap: 21px; padding-top: 2px; }
.status .timer { font-size: 20px; letter-spacing: 1.500px; color: #e6e6e6; margin-left: 3px; }
.request { margin: 0 10px 0 auto; width: 213px; height: 48px; background: #292929; color: #fff; border: 1px solid #555; border-radius: 4px; font-size: 19.500px; font-weight: 600; padding: 0; }
.tool { width: 84px; height: 80px; display: flex; flex-direction: column; align-items: center; justify-content: flex-start; color: #d8d8d8; font-size: 15.500px; padding-top: 9px; margin-top: 6px; }
.tool > svg { height: 34px; flex: none; }
.tool > span { margin-top: 3px; line-height: 24px; white-space: nowrap; }
.tool.on { color: #fff; }
.tool-mic { color: #fff; }
.ico { fill: none; stroke: #d8d8d8; stroke-width: 1.500; }
.vr { width: 1px; height: 48px; background: #5a5a5a; margin: 0 12.500px; flex: none; }
.leave { margin-left: 12px; width: 156px; height: 48px; background: #c4314b; color: #fff; border: 0; border-radius: 4px; font-size: 20px; font-weight: 600; display: flex; align-items: center; justify-content: center; gap: 12px; padding: 0; }

/* main */
.main { flex: 1; display: flex; min-height: 0; }
.stage { width: 1551px; flex: none; padding: 7px 0 0 10px; }
.share { width: 1534px; height: 857px; display: flex; flex-direction: column; position: relative; filter: blur(.35px); }
.foxit { height: 828px; flex: none; display: flex; flex-direction: column; background: #fff; color: #444; font-family: "Liberation Sans", Arial, sans-serif; font-size: 10.100px; }

.qa { height: 18px; flex: none; background: #f4f2f5; display: flex; align-items: center; position: relative; padding-left: 5px; }
.qa-icons { display: flex; gap: 6px; align-items: center; }
.doc-title { position: absolute; left: 714px; width: 168px; text-align: center; white-space: nowrap; font-size: 9.800px; color: #555; }
.qa-win { margin-left: auto; display: flex; gap: 18px; padding-right: 8px; align-items: center; }
.glyph-w { fill: #fff; font: 700 10px "Liberation Sans", sans-serif; text-anchor: middle; }
.glyph-w.big-g { font-size: 15px; }
.glyph-b { fill: #3f7cba; font: 700 10px "Liberation Sans", sans-serif; text-anchor: middle; }
.glyph-t { fill: #fff; font: 700 6px "Liberation Sans", sans-serif; text-anchor: middle; }
.glyph-z { fill: #0a68ff; font: 700 7px "Liberation Sans", sans-serif; text-anchor: middle; }
.glyph-zl { fill: #0a68ff; font: 700 13px "Liberation Sans", sans-serif; text-anchor: middle; }
.glyph-tm { fill: #fff; font: 700 15px "Liberation Sans", sans-serif; text-anchor: middle; }

.tabs { height: 20px; flex: none; background: #f4f2f5; display: flex; align-items: center; gap: 23px; color: #555; border-bottom: 1px solid #d4d4d4; font-size: 9.800px; }
.tabs > span { white-space: nowrap; padding-top: 2px; }
.t-file { width: 50px; height: 20px; background: #f5801f; color: #fff; text-align: center; line-height: 18px; margin-right: -22px; }
.t-home { width: 52px; height: 21px; background: #fff; color: #222; text-align: center; line-height: 18px; border: 1px solid #d4d4d4; border-bottom: 0; margin-right: -12px; font-size: 11px; align-self: flex-start; }
.bulb { margin-left: 3px; margin-right: -15px; }
.tell { color: #888; font-size: 10.300px; }
.find-wrap { margin-left: auto; display: flex; align-items: center; gap: 2px; padding-right: 2px; }
.find { width: 95px; height: 17px; border: 1px solid #c8c8c8; background: #fff; display: flex; align-items: center; justify-content: space-between; padding: 0 1px 0 3px; color: #777; margin-right: 3px; }
.gap8 { margin-left: 10px; }
.tri { display: inline-block; width: 0; height: 0; border: 3px solid transparent; border-top: 4px solid #333; border-bottom: 0; vertical-align: middle; }
.tri.small { margin-top: 3px; }

.ribbon { height: 74px; flex: none; background: #fdfdff; border-bottom: 2px solid #bcbcbc; display: flex; padding-left: 2px; position: relative; }
.group { display: flex; flex-direction: column; border-right: 1px solid #e6e6ea; flex: none; }
.gbody { flex: 1; display: flex; padding-top: 3px; min-height: 0; }
.glabel { height: 16px; text-align: center; font-size: 9.500px; color: #888; line-height: 14px; }
.g-tools { width: 143px; }
.g-view { width: 247px; }
.g-comment { width: 107px; }
.g-links { width: 73px; }
.g-insert { width: 110px; }
.big { display: flex; flex-direction: column; align-items: center; text-align: center; line-height: 13px; white-space: nowrap; padding-top: 4px; }
.big span { margin-top: 3px; }
.big svg { height: 23px; flex: none; }
.hand { width: 34px; height: 55px; background: #c5d3f0; }
.hand svg { width: 20px; }
.select { width: 36px; margin-left: 1px; }
.select svg { width: 22px; }
.col { display: flex; flex-direction: column; }
.sm { height: 17.500px; display: flex; align-items: center; gap: 4px; white-space: nowrap; }
.c-tools { margin-left: 2px; padding-top: 1px; }
.actual { width: 32px; margin-left: 5px; padding-top: 3px; }
.actual svg { width: 22px; }
.actual span { margin-top: 3px; line-height: 14.500px; }
.c-fit { margin-left: 2px; width: 62px; padding-top: 1px; }
.sm.hl { background: #cfdcf2; }
.c-fit .sm { padding-left: 3px; }
.reflow { width: 36px; }
.reflow svg { width: 20px; }
.c-zoom { margin-left: 3px; padding-left: 1px; padding-top: 1px; }
.zoomrow { gap: 4px; height: 18px; }
.zoombox { width: 62px; height: 18px; border: 1px solid #bbb; display: flex; align-items: center; justify-content: space-between; padding: 0 3px 0 4px; font-size: 10.300px; }
.typew { width: 56px; margin-left: 3px; padding-top: 3px; }
.highl { width: 46px; padding-top: 3px; }
.highl svg { width: 26px; }
.typew span, .highl span { margin-top: 4px; }
.g-links .col { padding: 1px 0 0 6px; }
.g-insert .col { padding: 1px 0 0 6px; }
.collapse { position: absolute; right: 3px; bottom: 4px; }

.doctabs { height: 25px; flex: none; background: #ededed; display: flex; align-items: flex-end; padding-left: 32px; position: relative; border-bottom: 2px solid #cfcfcf; }
.dtab { height: 21px; border: 1px solid #cfcfcf; border-bottom: 0; border-radius: 6px 6px 0 0; transform: skewX(-18deg); background: #ededed; display: flex; align-items: center; margin-right: 3px; flex: none; padding-top: 7px; }
.dtab span, .dtab em { transform: skewX(18deg); display: block; white-space: nowrap; font-style: normal; font-size: 9.800px; color: #555; }
.d0 { width: 120px; padding-left: 11px; }
.d1 { width: 115px; padding-left: 8px; }
.d2 { width: 142px; padding-left: 9px; background: #fff; justify-content: space-between; padding-right: 3px; }
.d2 em { font-size: 11px; color: #222; }
.d3 { width: 120px; padding-left: 12px; }
.tabarrow { margin: 0 6px 6px auto; }
.convert { width: 128px; height: 24px; background: #ff7a30; color: #fff; font: 14.800px "Noto Sans CJK SC", "Noto Sans", sans-serif; line-height: 24px; text-align: center; flex: none; align-self: flex-start; margin-top: 0; white-space: nowrap; }

.docrow { flex: 1; display: flex; min-height: 0; }
.side { width: 28px; flex: none; background: #f4f3f6; display: flex; flex-direction: column; align-items: center; padding-top: 6px; gap: 18px; }
.side svg { height: 18px; flex: none; }
.tri-right { width: 0; height: 0; border: 4px solid transparent; border-left: 5px solid #222; border-right: 0; margin: 0 0 10px 6px; }
.strip { width: 13px; flex: none; background: linear-gradient(90deg, #b4b6ba, #a7a9ad); padding: 285px 0 0 4px; }
.dots { display: block; width: 0; height: 36px; border-left: 2px dotted #8c8e92; }
.page { flex: 1; min-width: 0; overflow: hidden; background: #fff; color: #111; padding: 0 87px 0 86px; font-family: "Liberation Serif", "Times New Roman", serif; font-size: 28.900px; }
.ln { text-align: justify; text-align-last: justify; }
.end { text-align: left; white-space: nowrap; }
.para { line-height: 35px; margin-bottom: 20px; }
.first { margin-top: -12.500px; line-height: 35px; margin-bottom: 21px; }
.bullet { display: flex; line-height: 43.300px; margin-bottom: 14.500px; }
.b1 { margin-top: 15px; }
.dash { width: 87px; padding-left: 44px; flex: none; font-weight: 700; }
.btext { flex: 1; min-width: 0; }
.q7 { line-height: 43.700px; margin-top: 2px; }
.ast { font-size: .7em; line-height: 0; }
mark { background: #b3cbe6; color: inherit; }
.ibeam { display: inline-block; position: relative; width: 8px; }
.ibeam::before { content: ""; position: absolute; left: 2px; top: 9px; width: 3px; height: 16px; border: 1px solid #888; border-width: 1px 0; background: linear-gradient(90deg, transparent 1px, #666 1px, #666 2px, transparent 2px); }
.strip2 { width: 8px; flex: none; background: #b4b6ba; }
.vscroll { width: 12px; flex: none; background: #f5f5f5; display: flex; flex-direction: column; align-items: center; justify-content: space-between; padding-top: 3px; }
.thumb { width: 10px; height: 226px; background: #cbcbcb; margin-top: auto; margin-bottom: 30px; }

.statusbar { height: 24px; flex: none; background: #f0eff2; display: flex; align-items: center; padding: 0 14px 0 619px; color: #555; }
.pager { display: flex; align-items: center; gap: 9px; }
.pbox { width: 92px; height: 16px; background: #fff; border: 1px solid #bbb; display: flex; align-items: center; justify-content: space-between; padding: 0 3px 0 4px; font-size: 10px; letter-spacing: 1px; }
.viewbtns { margin-left: auto; display: flex; align-items: center; gap: 4px; }
.vb { width: 17px; height: 22px; display: flex; align-items: center; justify-content: center; }
.vb.active { background: #d8e2f4; }
.zoomval { margin: 0 5px 0 8px; font-size: 10.300px; }
.slider { width: 72px; height: 1px; background: #555; position: relative; margin: 0 2px; }
.slider i { position: absolute; left: 47px; top: -4px; width: 2px; height: 9px; background: #333; }

.innerbar { height: 29px; flex: none; background: linear-gradient(90deg, #2b2522, #3d2f2a 30%, #3c2e2a 60%, #3a2a24); display: flex; align-items: center; color: #ddd; }
.iconrow { display: flex; align-items: center; height: 29px; padding-left: 9px; }
.iconrow svg { width: 22px; height: 22px; flex: none; }
.iconrow > svg { margin-right: 17.200px; }
.foxbtn { width: 38px; height: 29px; margin: 0 0 0 -8px; background: #6a5d57; display: flex; align-items: center; justify-content: center; flex: none; }
.traymini { margin-left: auto; display: flex; align-items: center; font-family: "Liberation Sans", sans-serif; font-size: 10.300px; padding-right: 10px; }
.traymini > span { display: flex; align-items: center; justify-content: center; height: 29px; flex: none; }
.traymini > span:nth-child(1) { width: 20px; }
.traymini > span:nth-child(2) { width: 96px; font-size: 11px; white-space: nowrap; }
.traymini > span:nth-child(3) { width: 20px; }
.traymini > span:nth-child(4) { width: 18px; }
.traymini > span:nth-child(5) { width: 20px; }
.traymini > span:nth-child(6) { width: 19px; }
.traymini > span:nth-child(7) { width: 18px; }
.traymini > span:nth-child(8) { width: 20px; }
.traymini > span:nth-child(9) { width: 28px; }
.traymini > span:nth-child(10) { width: 26px; }
.traymini > span:nth-child(11) { width: 52px; text-align: center; font-size: 9.500px; line-height: 14px; }
.traymini > span:nth-child(12) { width: 32px; }

.nametag { position: absolute; left: 10px; top: 809px; width: 184px; height: 36px; background: rgba(52, 52, 52, .82); border-radius: 6px; color: #fff; font: 17px/36px "Open Sans", sans-serif; text-align: center; white-space: nowrap; }

/* gallery */
.gallery { flex: 1; min-width: 0; display: flex; flex-direction: column; background: radial-gradient(circle 130px at 98px 145px, #2a2a38, #1f1f1f 100%); }
.people { flex: 1; display: grid; grid-template-columns: 165px 165px; grid-auto-rows: 165px; padding: 92px 0 0 15.500px; }
.person { display: flex; flex-direction: column; align-items: center; }
.avatar { width: 105px; height: 105px; border-radius: 50%; display: flex; align-items: center; justify-content: center; font-size: 41px; font-weight: 500; flex: none; box-shadow: 0 2px 6px rgba(0, 0, 0, .35); letter-spacing: 1px; }
.a-nv { background: #e3dff0; color: #463d6e; }
.speaking { box-shadow: 0 0 0 3px #1c1c1c, 0 0 0 7px #6f74e4; }
.a-dh { background: #e5ebdc; color: #4f6a3a; }
.a-dk { background: #fdebd9; color: #8a5a26; }
.a-lt { background: #d9eff3; color: #2c6a6e; }
.a-dq { background: #d2eadc; color: #1c6a42; }
.a-more { background: #3f3f3f; border: 1px solid #5a5a5a; color: #fff; font-size: 20px; font-weight: 400; letter-spacing: 0; margin-top: 2px; }
.a-cm { width: 84px; height: 84px; background: #e5ebdc; color: #4f6a3a; font-size: 30px; }
.p-low { margin-top: 4px; }
.pname { width: 100%; padding-left: 14px; margin-top: 12px; font-size: 17px; line-height: 24px; color: #fff; white-space: nowrap; display: flex; align-items: center; position: relative; }
.pm { color: #fff; position: absolute; top: 2px; left: 134px; }
.cmtile { height: 200px; flex: none; margin: 0 7px 7px 0; background: #333; display: flex; align-items: center; justify-content: center; }

/* windows taskbar */
.wintask { height: 60px; flex: none; background: linear-gradient(90deg, #d0e6ee, #d2e4ee 50%, #d3dfed); display: flex; color: #111; position: relative; }
.wt { display: flex; align-items: center; justify-content: center; height: 60px; flex: none; position: relative; }
.w-start { width: 70px; }
.w-search { width: 76px; }
.w-edge { width: 78px; margin-right: 6px; }
.w-explorer { width: 61px; background: linear-gradient(90deg, #9fdba9 50px, #b9ceda 50px); border-bottom: 4px solid #3fdc3f; padding-top: 2px; }
.w-mail { width: 83px; padding-left: 5px; }
.w-teams { width: 72px; background: linear-gradient(90deg, #eaf3f8 66px, #b9ceda 66px, #b9ceda 68px, #d0e0ea 68px); border-bottom: 4px solid #0078d4; padding-right: 6px; padding-top: 2px; }
.w-zalo { width: 61px; margin-left: 9px; border-bottom: 4px solid #0078d4; padding: 2px 3px 0 0; }
.wtray { margin: 0 6px 0 auto; display: flex; height: 60px; padding-right: 13px; border-right: 1px solid #9aa3aa; }
.wtray > span { display: flex; align-items: center; justify-content: center; flex: none; position: relative; }
.wtray > span:nth-child(1) { width: 47px; }
.wtray > span:nth-child(2) { width: 48px; }
.wtray > span:nth-child(3) { width: 48px; }
.wtray > span:nth-child(4) { width: 49px; }
.wtray > span:nth-child(5) { width: 48px; }
.wtray > span:nth-child(6) { width: 50px; }
.wtray > span:nth-child(7) { width: 55px; }
.wtray > span:nth-child(8) { width: 56px; }
.wtray > span:nth-child(9) { width: 104px; }
.wtray > span:nth-child(10) { width: 60px; }
.w-eng { font-size: 16px; }
.w-clock { font-size: 17px; line-height: 28px; text-align: center; white-space: nowrap; }
.w-notif svg { margin: -10px 0 0 0; }
.nbadge { position: absolute; left: 30px; top: 27px; width: 24px; height: 24px; border-radius: 50%; background: #c9cdd0; border: 1px solid #8e9498; color: #111; font-size: 15px; font-weight: 600; line-height: 22px; text-align: center; }
```
